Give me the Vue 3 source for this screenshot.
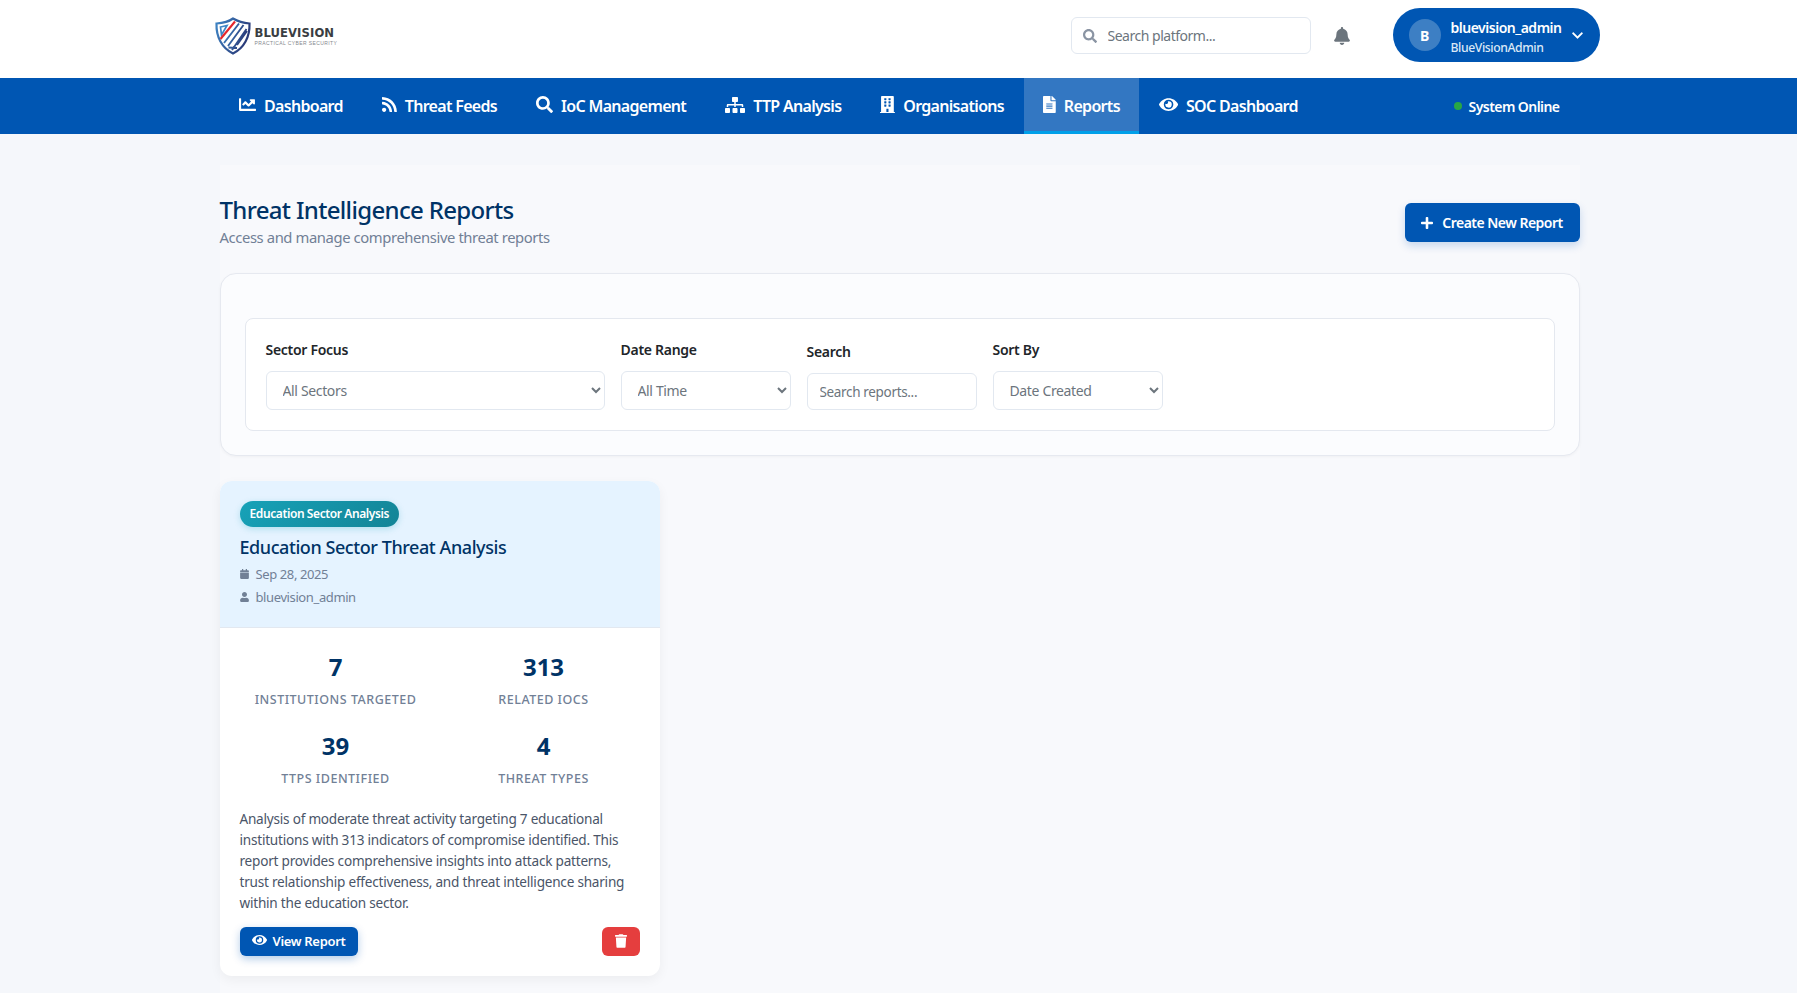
<script setup>
const ICONS = {
  chart: [512, 'M496 384H64V80c0-8.84-7.16-16-16-16H16C7.16 64 0 71.16 0 80v336c0 17.67 14.33 32 32 32h464c8.84 0 16-7.16 16-16v-32c0-8.84-7.16-16-16-16zM464 96H345.94c-21.38 0-32.09 25.85-16.97 40.97l32.4 32.4L288 242.75l-73.37-73.37c-12.5-12.5-32.76-12.5-45.25 0l-68.69 68.69c-6.25 6.25-6.25 16.38 0 22.63l22.62 22.62c6.25 6.25 16.38 6.25 22.63 0L192 237.25l73.37 73.37c12.5 12.5 32.76 12.5 45.25 0l96-96 32.4 32.4c15.12 15.12 40.97 4.41 40.97-16.97V112c.01-8.84-7.15-16-15.99-16z'],
  rss: [448, 'M128.081 415.959c0 35.369-28.672 64.041-64.041 64.041S0 451.328 0 415.959s28.672-64.041 64.041-64.041 64.04 28.673 64.04 64.041zm175.66 47.25c-8.354-154.6-132.185-278.587-286.95-286.95C7.656 175.765 0 183.105 0 192.253v48.069c0 8.415 6.49 15.472 14.887 16.018 111.832 7.284 201.473 96.702 208.772 208.772.547 8.397 7.604 14.887 16.018 14.887h48.069c9.149.001 16.489-7.655 15.995-16.79zm144.249.288C439.596 229.677 251.465 40.445 16.503 32.01 7.473 31.686 0 38.981 0 48.016v48.068c0 8.625 6.835 15.645 15.453 15.999 191.179 7.839 344.627 161.316 352.465 352.465.353 8.618 7.373 15.453 15.999 15.453h48.068c9.034-.001 16.329-7.474 16.005-16.504z'],
  search: [512, 'M505 442.7L405.3 343c-4.5-4.5-10.6-7-17-7H372c27.6-35.3 44-79.7 44-128C416 93.1 322.9 0 208 0S0 93.1 0 208s93.1 208 208 208c48.3 0 92.7-16.4 128-44v16.3c0 6.4 2.5 12.5 7 17l99.7 99.7c9.4 9.4 24.6 9.4 33.9 0l28.3-28.3c9.4-9.4 9.4-24.6.1-34zM208 336c-70.7 0-128-57.2-128-128 0-70.7 57.2-128 128-128 70.7 0 128 57.2 128 128 0 70.7-57.2 128-128 128z'],
  sitemap: [640, 'M128 352H32c-17.67 0-32 14.33-32 32v96c0 17.67 14.33 32 32 32h96c17.67 0 32-14.33 32-32v-96c0-17.67-14.33-32-32-32zm-24-80h192v48h48v-48h192v48h48v-57.59c0-21.17-17.23-38.41-38.41-38.41H344v-64h40c17.67 0 32-14.33 32-32V32c0-17.67-14.33-32-32-32H256c-17.67 0-32 14.33-32 32v96c0 17.67 14.33 32 32 32h40v64H94.41C73.23 224 56 241.23 56 262.41V320h48v-48zm264 80h-96c-17.67 0-32 14.33-32 32v96c0 17.67 14.33 32 32 32h96c17.67 0 32-14.33 32-32v-96c0-17.67-14.33-32-32-32zm240 0h-96c-17.67 0-32 14.33-32 32v96c0 17.67 14.33 32 32 32h96c17.67 0 32-14.33 32-32v-96c0-17.67-14.33-32-32-32z'],
  building: [448, 'M436 480h-20V24c0-13.255-10.745-24-24-24H56C42.745 0 32 10.745 32 24v456H12c-6.627 0-12 5.373-12 12v20h448v-20c0-6.627-5.373-12-12-12zM128 76c0-6.627 5.373-12 12-12h40c6.627 0 12 5.373 12 12v40c0 6.627-5.373 12-12 12h-40c-6.627 0-12-5.373-12-12V76zm0 96c0-6.627 5.373-12 12-12h40c6.627 0 12 5.373 12 12v40c0 6.627-5.373 12-12 12h-40c-6.627 0-12-5.373-12-12v-40zm52 148h-40c-6.627 0-12-5.373-12-12v-40c0-6.627 5.373-12 12-12h40c6.627 0 12 5.373 12 12v40c0 6.627-5.373 12-12 12zm76 160h-64v-84c0-6.627 5.373-12 12-12h40c6.627 0 12 5.373 12 12v84zm64-172c0 6.627-5.373 12-12 12h-40c-6.627 0-12-5.373-12-12v-40c0-6.627 5.373-12 12-12h40c6.627 0 12 5.373 12 12v40zm0-96c0 6.627-5.373 12-12 12h-40c-6.627 0-12-5.373-12-12v-40c0-6.627 5.373-12 12-12h40c6.627 0 12 5.373 12 12v40zm0-96c0 6.627-5.373 12-12 12h-40c-6.627 0-12-5.373-12-12V76c0-6.627 5.373-12 12-12h40c6.627 0 12 5.373 12 12v40z'],
  file: [384, 'M224 136V0H24C10.7 0 0 10.7 0 24v464c0 13.3 10.7 24 24 24h336c13.3 0 24-10.7 24-24V160H248c-13.2 0-24-10.8-24-24zm64 236c0 6.6-5.4 12-12 12H108c-6.6 0-12-5.4-12-12v-8c0-6.6 5.4-12 12-12h168c6.6 0 12 5.4 12 12v8zm0-64c0 6.6-5.4 12-12 12H108c-6.6 0-12-5.4-12-12v-8c0-6.6 5.4-12 12-12h168c6.6 0 12 5.4 12 12v8zm0-72v8c0 6.6-5.4 12-12 12H108c-6.6 0-12-5.4-12-12v-8c0-6.6 5.4-12 12-12h168c6.6 0 12 5.4 12 12zm96-114.1v6.1H256V0h6.1c6.4 0 12.5 2.5 17 7l97.9 98c4.5 4.5 7 10.6 7 16.9z'],
  eye: [576, 'M572.52 241.4C518.29 135.59 410.93 64 288 64S57.68 135.64 3.48 241.41a32.35 32.35 0 0 0 0 29.19C57.71 376.41 165.07 448 288 448s230.32-71.64 284.52-177.41a32.35 32.35 0 0 0 0-29.19zM288 400a144 144 0 1 1 144-144 143.93 143.93 0 0 1-144 144zm0-240a95.31 95.31 0 0 0-25.31 3.79 47.85 47.85 0 0 1-66.9 66.9A95.78 95.78 0 1 0 288 160z'],
  bell: [448, 'M224 512c35.32 0 63.97-28.65 63.97-64H160.03c0 35.35 28.65 64 63.97 64zm215.39-149.71c-19.32-20.76-55.47-51.99-55.47-154.29 0-77.7-54.48-139.9-127.94-155.16V32c0-17.67-14.32-32-31.98-32s-31.98 14.33-31.98 32v20.84C118.56 68.1 64.08 130.3 64.08 208c0 102.3-36.15 133.53-55.47 154.29-6 6.45-8.66 14.16-8.61 21.71.11 16.4 12.98 32 32.1 32h383.8c19.12 0 32-15.6 32.1-32 .05-7.55-2.61-15.27-8.61-21.71z'],
  chevron: [448, 'M207.029 381.476L12.686 187.132c-9.373-9.373-9.373-24.569 0-33.941l22.667-22.667c9.357-9.357 24.522-9.375 33.901-.04L224 284.505l154.745-154.021c9.379-9.335 24.544-9.317 33.901.04l22.667 22.667c9.373 9.373 9.373 24.569 0 33.941L240.971 381.476c-9.373 9.372-24.569 9.372-33.942 0z'],
  plus: [448, 'M416 208H272V64c0-17.67-14.33-32-32-32h-32c-17.67 0-32 14.33-32 32v144H32c-17.67 0-32 14.33-32 32v32c0 17.67 14.33 32 32 32h144v144c0 17.67 14.33 32 32 32h32c17.67 0 32-14.33 32-32V304h144c17.67 0 32-14.33 32-32v-32c0-17.67-14.33-32-32-32z'],
  calendar: [448, 'M12 192h424c6.6 0 12 5.4 12 12v260c0 26.5-21.5 48-48 48H48c-26.5 0-48-21.5-48-48V204c0-6.6 5.4-12 12-12zm436-44v-36c0-26.5-21.5-48-48-48h-48V12c0-6.6-5.4-12-12-12h-40c-6.6 0-12 5.4-12 12v52H160V12c0-6.6-5.4-12-12-12h-40c-6.6 0-12 5.4-12 12v52H48C21.5 64 0 85.5 0 112v36c0 6.6 5.4 12 12 12h424c6.6 0 12-5.4 12-12z'],
  user: [448, 'M224 256c70.7 0 128-57.3 128-128S294.7 0 224 0 96 57.3 96 128s57.3 128 128 128zm89.6 32h-16.7c-22.2 10.2-46.9 16-72.9 16s-50.6-5.8-72.9-16h-16.7C60.2 288 0 348.2 0 422.4V464c0 26.5 21.5 48 48 48h352c26.5 0 48-21.5 48-48v-41.6c0-74.2-60.2-134.4-134.4-134.4z'],
  trash: [448, 'M432 32H312l-9.4-18.7A24 24 0 0 0 281.1 0H166.8a23.72 23.72 0 0 0-21.4 13.3L136 32H16A16 16 0 0 0 0 48v32a16 16 0 0 0 16 16h416a16 16 0 0 0 16-16V48a16 16 0 0 0-16-16zM53.2 467a48 48 0 0 0 47.9 45h245.8a48 48 0 0 0 47.9-45L416 128H32z'],
}

const navItems = [
  { label: 'Dashboard', icon: ICONS.chart },
  { label: 'Threat Feeds', icon: ICONS.rss },
  { label: 'IoC Management', icon: ICONS.search },
  { label: 'TTP Analysis', icon: ICONS.sitemap, small: true },
  { label: 'Organisations', icon: ICONS.building },
  { label: 'Reports', icon: ICONS.file, active: true },
  { label: 'SOC Dashboard', icon: ICONS.eye },
]

const stats = [
  { value: '7', label: 'Institutions Targeted' },
  { value: '313', label: 'Related IoCs' },
  { value: '39', label: 'TTPs Identified' },
  { value: '4', label: 'Threat Types' },
]
</script>

<template>
  <div class="page">
    <header class="top">
      <div class="top-inner">
        <div class="logo">
          <svg class="shield" viewBox="0 0 38 38" aria-hidden="true">
            <defs>
              <linearGradient id="shieldGrad" x1="0" y1="0" x2="1" y2="0.4">
                <stop offset="0" stop-color="#3f86c6"/>
                <stop offset="1" stop-color="#2a3a78"/>
              </linearGradient>
            </defs>
            <path d="M2.5 6.5 C10 6 15 4.5 19 1.5 C24 4.5 29 6 35.5 6.5 C36 20 30 31 19 36.5 C8 31 2 20 2.5 6.5Z" fill="#fff" stroke="url(#shieldGrad)" stroke-width="2.2"/>
            <path d="M6.5 10 L13 8.5 L7.5 18 Z" fill="none" stroke="#3f86c6" stroke-width="1.7"/>
            <path d="M6.5 22 L21 4.5" fill="none" stroke="#e5262b" stroke-width="2.1"/>
            <path d="M10 26 L25 6.5 M14.5 30.5 L23 31 M14 29 L29.5 8 M18 33 L32.5 12 M23 28 L33 14" fill="none" stroke="url(#shieldGrad)" stroke-width="1.9"/>
          </svg>
          <div class="logo-text">
            <div class="logo-name">BLUEVISION</div>
            <div class="logo-tag">PRACTICAL CYBER SECURITY</div>
          </div>
        </div>
        <div class="top-right">
          <label class="top-search">
            <svg class="ico search-ico" :viewBox="`0 0 ${ICONS.search[0]} 512`"><path :d="ICONS.search[1]"/></svg>
            <input type="text" placeholder="Search platform..." />
          </label>
          <svg class="ico bell" :viewBox="`0 0 ${ICONS.bell[0]} 512`"><path :d="ICONS.bell[1]"/></svg>
          <div class="user">
            <div class="avatar">B</div>
            <div class="user-text">
              <div class="user-name">bluevision_admin</div>
              <div class="user-org">BlueVisionAdmin</div>
            </div>
            <svg class="ico chev" :viewBox="`0 0 ${ICONS.chevron[0]} 512`"><path :d="ICONS.chevron[1]"/></svg>
          </div>
        </div>
      </div>
    </header>

    <nav class="nav">
      <div class="nav-inner">
        <ul class="nav-list">
          <li v-for="item in navItems" :key="item.label" class="nav-item" :class="{ active: item.active }">
            <svg class="ico nav-ico" :class="{ small: item.small }" :viewBox="`0 0 ${item.icon[0]} 512`"><path :d="item.icon[1]"/></svg>
            <span>{{ item.label }}</span>
          </li>
        </ul>
        <div class="status"><span class="dot"></span>System Online</div>
      </div>
    </nav>

    <main class="main">
      <div class="content">
        <div class="head">
          <div>
            <h1>Threat Intelligence Reports</h1>
            <p>Access and manage comprehensive threat reports</p>
          </div>
          <button class="btn-create">
            <svg class="ico plus" :viewBox="`0 0 ${ICONS.plus[0]} 512`"><path :d="ICONS.plus[1]"/></svg>
            Create New Report
          </button>
        </div>

        <section class="filter-card">
          <div class="filters">
            <div class="field wide">
              <label>Sector Focus</label>
              <select><option>All Sectors</option></select>
            </div>
            <div class="field">
              <label>Date Range</label>
              <select><option>All Time</option></select>
            </div>
            <div class="field">
              <label>Search</label>
              <input type="text" placeholder="Search reports..." />
            </div>
            <div class="field">
              <label>Sort By</label>
              <select><option>Date Created</option></select>
            </div>
          </div>
        </section>

        <article class="report">
          <div class="report-head">
            <span class="badge">Education Sector Analysis</span>
            <h3>Education Sector Threat Analysis</h3>
            <div class="meta">
              <svg class="ico" :viewBox="`0 0 ${ICONS.calendar[0]} 512`"><path :d="ICONS.calendar[1]"/></svg>
              <span>Sep 28, 2025</span>
            </div>
            <div class="meta">
              <svg class="ico" :viewBox="`0 0 ${ICONS.user[0]} 512`"><path :d="ICONS.user[1]"/></svg>
              <span>bluevision_admin</span>
            </div>
          </div>
          <div class="report-body">
            <div class="stats">
              <div v-for="s in stats" :key="s.label" class="stat">
                <div class="stat-value">{{ s.value }}</div>
                <div class="stat-label">{{ s.label }}</div>
              </div>
            </div>
            <p class="desc">Analysis of moderate threat activity targeting 7 educational institutions with 313 indicators of compromise identified. This report provides comprehensive insights into attack patterns, trust relationship effectiveness, and threat intelligence sharing within the education sector.</p>
            <div class="actions">
              <button class="btn-view">
                <svg class="ico" :viewBox="`0 0 ${ICONS.eye[0]} 512`"><path :d="ICONS.eye[1]"/></svg>
                View Report
              </button>
              <button class="btn-del" aria-label="Delete">
                <svg class="ico" :viewBox="`0 0 ${ICONS.trash[0]} 512`"><path :d="ICONS.trash[1]"/></svg>
              </button>
            </div>
          </div>
        </article>
      </div>
    </main>
  </div>
</template>

<style>
html, body { margin: 0; overflow: hidden; background: #f5f7fb; }
</style>

<style scoped>
* { box-sizing: border-box; }
.page {
  height: 993px;
  overflow: hidden;
  font-family: "Noto Sans", "Open Sans", sans-serif;
  letter-spacing: -0.025em;
  color: #2d3748;
}
.ico { fill: currentColor; display: block; flex: none; }

.top { background: #fff; height: 78px; padding-bottom: 7px; }
.top-inner {
  width: 1400px; height: 100%; margin-left: 199.5px; padding-left: 14px;
  display: flex; align-items: center; justify-content: space-between;
}
.logo { display: flex; align-items: center; }
.shield { width: 38px; height: 38px; }
.logo-text { margin: 2px 0 0 3px; letter-spacing: 0; }
.logo-name { font-family: "DejaVu Sans", sans-serif; font-weight: 700; font-size: 11.6px; line-height: 13px; color: #3a3d42; letter-spacing: 0.1px; }
.logo-tag { font-family: "Liberation Sans", sans-serif; font-size: 5px; line-height: 6px; color: #85888d; letter-spacing: 0.4px; white-space: nowrap; }
.top-right { display: flex; align-items: center; }
.top-search {
  width: 240px; height: 37px; border: 1px solid #e2e8f0; border-radius: 6px;
  display: flex; align-items: center; padding-left: 11px; gap: 11px; background: #fff;
}
.search-ico { width: 14px; height: 14px; color: #8a94a3; }
.top-search input {
  border: 0; outline: 0; background: none; width: 190px; padding: 0;
  font: inherit; font-size: 14px; letter-spacing: -0.035em; color: #4a5568;
}
.top-search input::placeholder { color: #6c757d; opacity: 1; }
.bell { width: 16px; height: 18px; color: #6c757d; margin-left: 23px; }
.user {
  margin: -1px 0 0 43px; width: 207px; height: 54px; border-radius: 27px; background: #0056b3;
  color: #fff; display: flex; align-items: center; padding: 0 15px 0 16px;
}
.avatar {
  width: 32px; height: 32px; border-radius: 50%; background: #3d7fc4;
  display: flex; align-items: center; justify-content: center;
  font-weight: 700; font-size: 14px;
}
.user-text { margin-left: 10px; flex: 1; padding-top: 3px; }
.user-name { font-size: 14px; font-weight: 600; line-height: 19px; letter-spacing: -0.035em; }
.user-org { font-size: 12.2px; font-weight: 500; line-height: 16px; margin-top: 3px; color: #dbe8f6; }
.chev { width: 11px; height: 13px; margin-right: 2px; }

.nav { background: #0056b3; height: 56px; }
.nav-inner {
  width: 1360px; height: 100%; margin-left: 219.5px;
  display: flex; align-items: center; justify-content: space-between;
}
.nav-list { display: flex; list-style: none; margin: 0; padding: 0; height: 100%; }
.nav-item {
  display: flex; align-items: center; gap: 8px; padding: 0 19.5px; height: 100%;
  color: #fff; font-size: 16px; font-weight: 600; border-bottom: 3px solid transparent;
  letter-spacing: -0.043em;
}
.nav-item span { position: relative; top: 1px; }
.nav-item.active { background: rgba(255,255,255,.2); border-bottom-color: #00a0e9; }
.nav-ico { height: 17px; width: auto; }
.nav-ico.small { height: 16px; }
.status { display: flex; align-items: center; color: #fff; font-size: 14px; font-weight: 600; margin-right: 20px; letter-spacing: -0.04em; }
.dot { width: 8px; height: 8px; border-radius: 50%; background: #28a745; margin-right: 7px; }

.main { padding-top: 31px; }
.content { width: 1360px; margin-left: 219.5px; background: #f8f9fc; min-height: 840px; }
.head { display: flex; align-items: flex-start; justify-content: space-between; padding-top: 29px; height: 108px; }
h1 { margin: 0; font-size: 24px; line-height: 32px; font-weight: 500; color: #003366; letter-spacing: -0.028em; }
.head p { margin: 2px 0 0; font-size: 14.8px; line-height: 19px; color: #718096; }
.btn-create {
  margin-top: 9px; width: 175px; height: 39px; border: 0; border-radius: 6px; background: #0056b3; color: #fff;
  display: flex; align-items: center; justify-content: center; gap: 9px;
  font: inherit; font-size: 14px; font-weight: 600; letter-spacing: -0.037em;
  box-shadow: 0 4px 8px rgba(0,86,179,.2);
}
.plus { width: 12px; height: 14px; }

.filter-card {
  background: #fbfcfe; border: 1px solid #e6e9f0; border-radius: 16px;
  padding: 44px 24px 24px; box-shadow: 0 1px 3px rgba(0,0,0,.04);
}
.filters {
  background: #fff; border: 1px solid #e4e8ef; border-radius: 8px;
  padding: 17px 20px 20px; height: 113px;
  display: flex; align-items: flex-end; gap: 16px;
}
.field { width: 170px; display: flex; flex-direction: column; }
.field.wide { width: 339px; }
.field label { font-size: 14px; font-weight: 600; line-height: 19px; color: #212529; margin-bottom: 12px; letter-spacing: -0.02em; }
.field select, .field input {
  width: 100%; border: 1px solid #e2e8f0; border-radius: 6px; background: #fff;
  font: inherit; font-size: 14px; letter-spacing: -0.025em; color: #6c757d; outline: 0;
}
.field select { height: 39px; padding: 0 12px; }
.field input { height: 37px; padding: 0 12px; font-size: 13.5px; }
.field input::placeholder { color: #6c757d; opacity: 1; }

.report {
  width: 440px; margin-top: 25px; background: #fff; border-radius: 12px; overflow: hidden;
  box-shadow: 0 4px 12px rgba(0,0,0,.05);
}
.report-head { background: #e5f3ff; height: 147px; padding: 20px 20px 0; border-bottom: 1px solid #e2e8f0; }
.badge {
  display: inline-block; height: 26px; line-height: 26px; padding: 0 10px; border-radius: 13px;
  background: linear-gradient(135deg, #17a2b8, #138496); color: #fff; font-size: 12px; font-weight: 600;
  box-shadow: 0 2px 6px rgba(23,162,184,.25);
}
h3 { margin: 7px 0 0; font-size: 18px; line-height: 27px; font-weight: 500; color: #003366; letter-spacing: -0.024em; }
.meta { display: flex; align-items: center; gap: 7px; font-size: 13px; color: #718096; height: 23px; margin-top: 0; letter-spacing: -0.03em; }
.report-head h3 + .meta { margin-top: 1px; }
.meta .ico { width: 9px; height: 10px; }
.report-body { padding: 23px 20px 0; }
.stats { display: grid; grid-template-columns: 1fr 1fr; row-gap: 21.5px; column-gap: 16px; }
.stat { text-align: center; }
.stat-value { font-size: 24px; line-height: 32px; font-weight: 700; color: #003366; letter-spacing: 0; }
.stat-label {
  font-size: 12.5px; line-height: 17px; font-weight: 500; color: #718096; margin-top: 8px;
  text-transform: uppercase; letter-spacing: 0.5px;
}
.desc { margin: 21px 0 0; font-size: 13.6px; line-height: 21px; color: #4a5568; letter-spacing: -0.017em; }
.actions { display: flex; justify-content: space-between; margin-top: 14px; padding-bottom: 20px; }
.btn-view {
  width: 118px; height: 29px; border: 0; border-radius: 6px; background: #0056b3; color: #fff;
  display: flex; align-items: center; justify-content: center; gap: 6px;
  font: inherit; font-size: 13px; font-weight: 600; letter-spacing: -0.025em;
  box-shadow: 0 3px 8px rgba(0,86,179,.3);
}
.btn-view .ico { width: 15px; height: 14px; margin-top: -3px; }
.btn-del {
  width: 38px; height: 29px; border: 0; border-radius: 6px; background: #e53e3e; color: #fff;
  display: flex; align-items: center; justify-content: center;
}
.btn-del .ico { width: 12px; height: 14px; }
</style>
